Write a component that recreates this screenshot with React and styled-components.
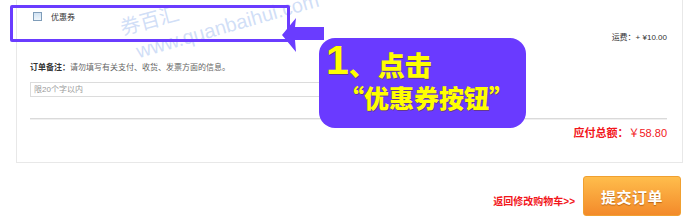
import React from "react";
import styled, { createGlobalStyle } from "styled-components";

const Global = createGlobalStyle`
  html, body { margin: 0; padding: 0; background: #fff; }
  body { font-family: "Liberation Sans", "Noto Sans CJK SC", sans-serif; overflow: hidden; }
`;

const Page = styled.div`
  position: relative;
  width: 700px;
  height: 218px;
  padding: 0 17px 0 16px;
  box-sizing: border-box;
  overflow: hidden;
`;

const Panel = styled.div`
  box-sizing: border-box;
  width: 667px;
  border: 1px solid #e8e8e8;
  border-top: none;
  padding: 10px 15px 22px 13px;
  display: flex;
  flex-direction: column;
`;

const CouponRow = styled.label`
  display: flex;
  align-items: center;
  gap: 9px;
  height: 12px;
  padding-left: 3px;
  font-size: 8px;
  color: #333;
`;

const Check = styled.span`
  width: 7px;
  height: 7px;
  border: 1px solid #7f9db9;
  background: linear-gradient(#d2e3f3, #eef5fb);
`;

const Freight = styled.div`
  margin-top: 10px;
  text-align: right;
  font-size: 8px;
  line-height: 12px;
  color: #333;
`;

const Remark = styled.div`
  margin-top: 18px;
  font-size: 8px;
  line-height: 12px;
  color: #666;
  b { color: #333; font-weight: bold; }
`;

const Input = styled.div`
  margin-top: 8px;
  width: 300px;
  height: 15px;
  box-sizing: border-box;
  border: 1px solid #dcdcdc;
  padding-left: 3px;
  font-size: 8px;
  line-height: 13px;
  color: #999;
`;

const Divider = styled.div`
  margin-top: 21px;
  height: 1px;
  background: #dadada;
  box-shadow: 0 1px 0 #f0f0f0;
`;

const Total = styled.div`
  margin-top: 7px;
  text-align: right;
  font-size: 11px;
  line-height: 14px;
  color: #f2161b;
  b { font-weight: bold; }
`;

const Footer = styled.div`
  display: flex;
  justify-content: flex-end;
  align-items: center;
  gap: 8px;
  margin-top: 13px;
  margin-right: 2px;
`;

const BackLink = styled.a`
  margin-top: 8px;
  font-size: 10px;
  font-weight: bold;
  color: #f2161b;
  text-decoration: none;
`;

const SubmitButton = styled.button`
  width: 98px;
  height: 40px;
  border: 1px solid #f0a030;
  border-radius: 3px;
  background: linear-gradient(#ffbd4c, #f38a2a);
  color: #fff;
  font-family: "Noto Sans CJK SC", sans-serif;
  font-weight: bold;
  font-size: 15px;
  letter-spacing: 0.5px;
  text-shadow: 0 1px 1px rgba(150, 70, 0, 0.6);
  padding: 0;
`;

const Highlight = styled.div`
  position: absolute;
  left: 10px;
  top: 5px;
  width: 280px;
  height: 37px;
  box-sizing: border-box;
  border: 3px solid #6a3cff;
  border-radius: 2px;
`;

const Arrow = styled.svg`
  position: absolute;
  left: 280px;
  top: 16px;
`;

const Callout = styled.div`
  position: absolute;
  left: 319px;
  top: 38px;
  width: 207px;
  height: 90px;
  border-radius: 16px;
  background: #6a3aff;
  color: #ffff00;
  font-family: "Noto Sans CJK SC", sans-serif;
  font-weight: 900;
  text-shadow: 1px 1px 0 rgba(90, 60, 0, 0.45);
  box-sizing: border-box;
  padding: 4px 0 0 7px;
`;

const CalloutLine = styled.div`
  display: flex;
  align-items: flex-end;
  height: ${(p) => p.$h}px;
  padding-left: ${(p) => p.$indent || 0}px;
  font-size: ${(p) => p.$size}px;
  line-height: 1;
  white-space: nowrap;
`;

const Big = styled.span`
  font-family: "Liberation Sans", sans-serif;
  font-size: 41px;
  line-height: 36px;
  font-weight: bold;
`;

const Gap = styled.span`
  margin-left: ${(p) => p.$w}px;
`;

const Watermark = styled.div`
  position: absolute;
  left: ${(p) => p.$x}px;
  top: ${(p) => p.$y}px;
  font-size: ${(p) => p.$size}px;
  color: rgba(170, 195, 240, 0.55);
  font-family: "Liberation Sans", "Noto Sans CJK SC", sans-serif;
  transform: rotate(${(p) => p.$rot}deg);
  transform-origin: left bottom;
  white-space: nowrap;
  pointer-events: none;
`;

export default function App() {
  return (
    <>
      <Global />
      <Page>
        <Panel>
          <CouponRow>
            <Check />
            <span>优惠券</span>
          </CouponRow>
          <Freight>运费：+ ¥10.00</Freight>
          <Remark>
            <b>订单备注：</b>请勿填写有关支付、收货、发票方面的信息。
          </Remark>
          <Input>限20个字以内</Input>
          <Divider />
          <Total>
            <b>应付总额：</b>￥58.80
          </Total>
        </Panel>
        <Footer>
          <BackLink href="#">返回修改购物车&gt;&gt;</BackLink>
          <SubmitButton>提交订单</SubmitButton>
        </Footer>

        <Watermark $x={124} $y={12} $size={20} $rot={-15}>券百汇</Watermark>
        <Watermark $x={140} $y={40} $size={20} $rot={-16}>www.quanbaihui.com</Watermark>

        <Highlight />
        <Arrow width="46" height="38" viewBox="0 0 46 38">
          <polygon points="2,19 16,2 15,11 44,11 44,24 15,24 16,36" fill="#6a3cff" />
        </Arrow>
        <Callout>
          <CalloutLine $h={36} $size={27}>
            <Big>1</Big>
            <span>、</span>
            <Gap $w={2}>点击</Gap>
          </CalloutLine>
          <CalloutLine $h={32} $size={25} $indent={13}>
            “优惠券按钮”
          </CalloutLine>
        </Callout>
      </Page>
    </>
  );
}
